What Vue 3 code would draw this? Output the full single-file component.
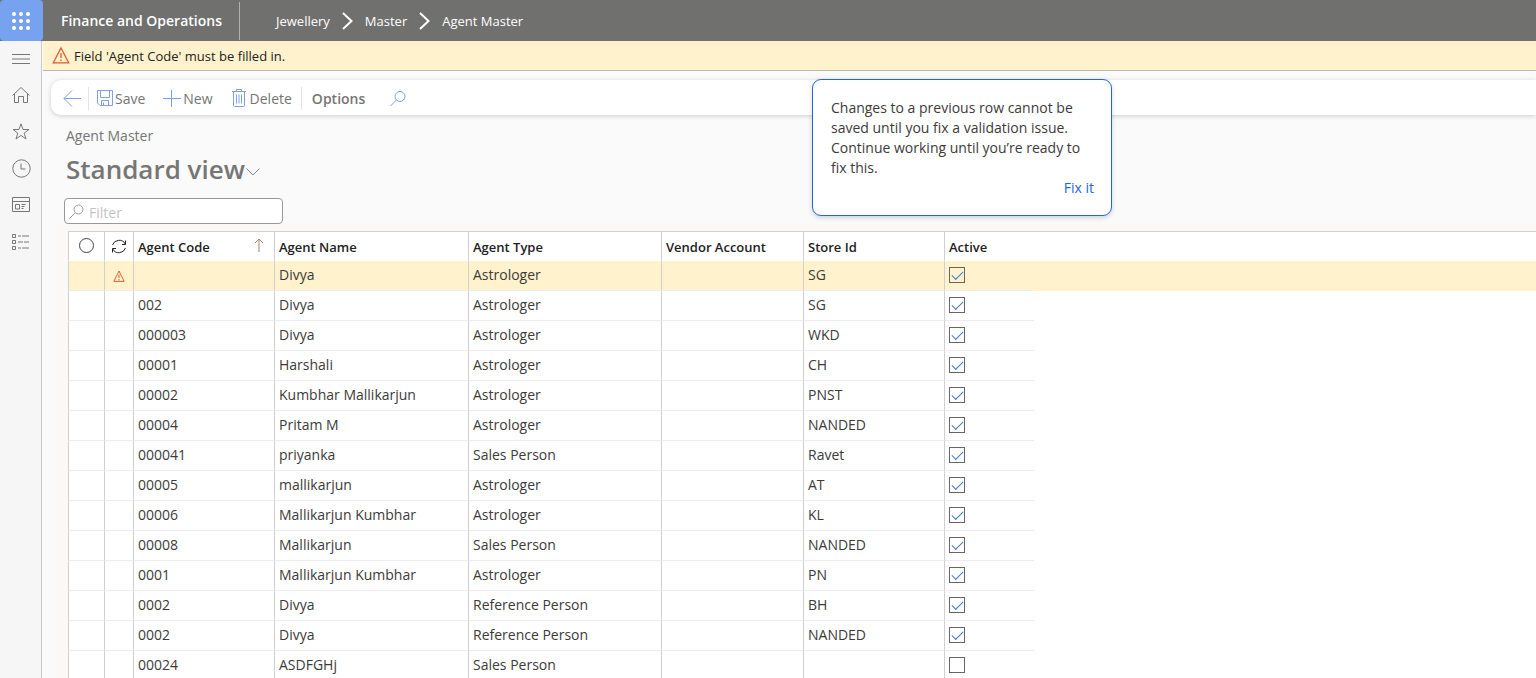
<script setup>
import { ref } from 'vue'

const crumbs = ['Jewellery', 'Master', 'Agent Master']
const columns = ['Agent Name', 'Agent Type', 'Vendor Account', 'Store Id', 'Active']
const filter = ref('')

const rows = ref(
  [
    ['', 'Divya', 'Astrologer', 'SG', true],
    ['002', 'Divya', 'Astrologer', 'SG', true],
    ['000003', 'Divya', 'Astrologer', 'WKD', true],
    ['00001', 'Harshali', 'Astrologer', 'CH', true],
    ['00002', 'Kumbhar Mallikarjun', 'Astrologer', 'PNST', true],
    ['00004', 'Pritam M', 'Astrologer', 'NANDED', true],
    ['000041', 'priyanka', 'Sales Person', 'Ravet', true],
    ['00005', 'mallikarjun', 'Astrologer', 'AT', true],
    ['00006', 'Mallikarjun Kumbhar', 'Astrologer', 'KL', true],
    ['00008', 'Mallikarjun', 'Sales Person', 'NANDED', true],
    ['0001', 'Mallikarjun Kumbhar', 'Astrologer', 'PN', true],
    ['0002', 'Divya', 'Reference Person', 'BH', true],
    ['0002', 'Divya', 'Reference Person', 'NANDED', true],
    ['00024', 'ASDFGHj', 'Sales Person', '', false],
  ].map(([code, name, type, store, active]) => ({ code, name, type, store, active }))
)
</script>

<template>
  <div class="app">
    <header class="topbar">
      <button class="waffle" type="button" aria-label="App launcher">
        <svg width="20" height="20" viewBox="0 0 20 20" fill="#fff">
          <template v-for="y in 3" :key="y">
            <circle v-for="x in 3" :key="x" :cx="x * 7 - 4" :cy="y * 7 - 4" r="2" />
          </template>
        </svg>
      </button>
      <span class="brand">Finance and Operations</span>
      <nav class="crumbs" aria-label="Breadcrumb">
        <template v-for="(c, i) in crumbs" :key="c">
          <svg v-if="i" width="11" height="18" viewBox="0 0 11 18" fill="none" stroke="#fff" stroke-width="2">
            <path d="M1 1l8.500 8L1 17" />
          </svg>
          <a href="#">{{ c }}</a>
        </template>
      </nav>
    </header>

    <div class="body">
      <nav class="rail" aria-label="Navigation">
        <button type="button" aria-label="Expand navigation">
          <svg width="20" height="20" viewBox="0 0 20 20"><path d="M1 5.500h18M1 10h18M1 14.500h18" /></svg>
        </button>
        <button type="button" aria-label="Home">
          <svg width="20" height="20" viewBox="0 0 20 20">
            <path d="M1.500 9.500L10 1.500l8.500 8M3.500 8v8.500h4v-6h5v6h4V8" />
          </svg>
        </button>
        <button type="button" aria-label="Favorites">
          <svg width="20" height="20" viewBox="0 0 20 20">
            <path d="M10 1.800l2 5.700h6l-4.800 3.600 1.800 5.900-5-3.600-5 3.600 1.800-5.900L2 7.500h6z" />
          </svg>
        </button>
        <button type="button" aria-label="Recent">
          <svg width="20" height="20" viewBox="0 0 20 20">
            <circle cx="10.500" cy="9.500" r="8.700" /><path d="M10 4.500v5.500h4.500" />
          </svg>
        </button>
        <button type="button" aria-label="Workspaces">
          <svg width="20" height="20" viewBox="0 0 20 20">
            <path d="M1.500 2.500h17v14h-17zM1.500 6.500h17M4.500 9.500h4v4.500h-4zM10.500 9.500h4M10.500 11.500h3M10.500 13.500h2" />
          </svg>
        </button>
        <button type="button" aria-label="Modules">
          <svg width="20" height="20" viewBox="0 0 20 20">
            <path d="M1.500 2.500h3v3h-3zM1.500 8.500h3v3h-3zM1.500 14.500h3v3h-3zM7 4h3M11 4h7M7 10h5M13 10h5M7 16h3M11 16h7" />
          </svg>
        </button>
      </nav>

      <main class="main">
        <div class="alert" role="alert">
          <svg width="18" height="18" viewBox="0 0 18 18" fill="none" stroke="#e05a28" stroke-width="1.300">
            <path d="M9 1L16.700 15.800H1.300zM9 6v5M9 12.500v1.500" />
          </svg>
          Field 'Agent Code' must be filled in.
        </div>

        <div class="toolbar">
          <button class="back" type="button" aria-label="Back">
            <svg width="18" height="18" viewBox="0 0 18 18"><path d="M18 8.500H1M9 .500L1 8.500l8 8" /></svg>
          </button>
          <span class="sep"></span>
          <button class="save" type="button">
            <svg width="16" height="18" viewBox="0 0 16 18">
              <path d="M.500 .500h15v15H3l-2.500-2.500zM3.500 .500v7h9v-7M4.500 15.500v-5h7v5M6.500 12.500v3" />
            </svg>
            Save
          </button>
          <button class="new" type="button">
            <svg width="18" height="18" viewBox="0 0 18 18"><path d="M8.500 0v17M0 8.500h18" /></svg>
            New
          </button>
          <button class="delete" type="button">
            <svg width="16" height="20" viewBox="0 0 16 20">
              <path d="M1 2.500h14M5.500 2.500v-2h5v2M2.500 2.500v14q0 1 1 1h9q1 0 1-1v-14M5.500 5.500v9M8 5.500v9M10.500 5.500v9" />
            </svg>
            Delete
          </button>
          <span class="sep"></span>
          <button class="options" type="button">Options</button>
          <button class="search" type="button" aria-label="Search">
            <svg width="16" height="16" viewBox="0 0 16 16"><circle cx="10" cy="5.500" r="5" /><path d="M6.500 9L.500 15" /></svg>
          </button>
        </div>

        <div class="heading">
          <div class="caption">Agent Master</div>
          <h1>
            Standard view
            <button type="button" aria-label="Change view">
              <svg width="14" height="10" viewBox="0 0 14 10"><path d="M.500 1.500L7 8l6.500-6.500" /></svg>
            </button>
          </h1>
          <label class="filter">
            <svg width="15" height="15" viewBox="0 0 15 15"><circle cx="9.500" cy="5.500" r="4.500" /><path d="M6.300 8.700L.500 14.500" /></svg>
            <input v-model="filter" type="text" placeholder="Filter" aria-label="Filter" />
          </label>
        </div>

        <section class="grid">
          <table>
            <colgroup>
              <col class="c-sel" /><col class="c-state" /><col class="c-code" /><col class="c-name" />
              <col class="c-type" /><col class="c-vendor" /><col class="c-store" /><col class="c-active" /><col />
            </colgroup>
            <thead>
              <tr>
                <th class="icon">
                  <button type="button" aria-label="Select all">
                    <svg width="16" height="16" viewBox="0 0 16 16"><circle cx="7.500" cy="7.500" r="7" /></svg>
                  </button>
                </th>
                <th class="icon">
                  <button type="button" aria-label="Refresh">
                    <svg class="refresh" width="16" height="16" viewBox="0 0 16 16">
                      <path d="M1.500 7A7 7 0 0 1 14.300 6M14.500 2.500v4H11M14.500 10A7 7 0 0 1 1.700 11M1.500 14.500v-4H5" />
                    </svg>
                  </button>
                </th>
                <th>
                  <span class="sorted">Agent Code
                    <svg width="10" height="16" viewBox="0 0 10 16"><path d="M5 13V0M1 4l4-4 4 4" /></svg>
                  </span>
                </th>
                <th v-for="c in columns" :key="c">{{ c }}</th>
                <th class="rest"></th>
              </tr>
            </thead>
            <tbody>
              <tr v-for="(r, i) in rows" :key="i" :class="{ invalid: i === 0 }">
                <td></td>
                <td class="icon">
                  <svg v-if="i === 0" class="warn" width="12" height="12" viewBox="0 0 12 12">
                    <path d="M6 1L11.200 11.400H.800zM6 4.500V8M6 9v1.500" />
                  </svg>
                </td>
                <td>{{ r.code }}</td>
                <td>{{ r.name }}</td>
                <td>{{ r.type }}</td>
                <td></td>
                <td>{{ r.store }}</td>
                <td class="check"><input v-model="r.active" type="checkbox" :aria-label="'Active, ' + r.name" /></td>
                <td class="rest"></td>
              </tr>
            </tbody>
          </table>
        </section>

        <aside class="callout" role="dialog" aria-label="Validation issue">
          <p>Changes to a previous row cannot be saved until you fix a validation issue. Continue working until you’re ready to fix this.</p>
          <a href="#">Fix it</a>
        </aside>
      </main>
    </div>
  </div>
</template>

<style>
body {
  margin: 0;
}
</style>

<style scoped>
.app {
  display: flex;
  flex-direction: column;
  height: 100vh;
  overflow: hidden;
  font-family: "Segoe UI", "Open Sans", "Noto Sans", sans-serif;
  font-size: 14px;
  color: #3c3b3a;
  background: #fafafa;
}
* {
  box-sizing: border-box;
}
button {
  display: inline-flex;
  align-items: center;
  padding: 0;
  border: 0;
  background: none;
  font: inherit;
  color: inherit;
}
a {
  color: inherit;
  text-decoration: none;
}
svg {
  flex: none;
  display: block;
  overflow: visible;
}
.topbar {
  display: flex;
  align-items: center;
  flex: none;
  height: 41px;
  background: #70706e;
  color: #fff;
}
.waffle {
  justify-content: center;
  width: 43px;
  height: 41px;
  padding-right: 1px;
  border-radius: 4px;
  background: #76a2f0;
}
.brand {
  width: 197px;
  padding-left: 18px;
  border-right: 1px solid #b0b0ae;
  line-height: 38px;
  font-weight: 600;
}
.crumbs {
  display: flex;
  align-items: center;
  gap: 12px;
  padding-left: 36px;
  font-size: 13px;
}
.body {
  display: flex;
  flex: 1;
  min-height: 0;
}
.rail {
  display: grid;
  grid-auto-rows: 36px 37px;
  align-content: start;
  flex: none;
  width: 42px;
  border-right: 1px solid #c8c8c8;
  background: #f6f6f6;
}
.rail button {
  justify-content: center;
}
.rail svg {
  fill: none;
  stroke: #767674;
}
.main {
  position: relative;
  flex: 1;
  min-width: 0;
  margin-left: 1px;
}
.alert {
  display: flex;
  align-items: center;
  gap: 4px;
  height: 30px;
  padding-left: 9px;
  border-bottom: 1px solid #bcb8b4;
  background: #fff2cd;
  font-size: 13px;
  color: #222;
}
.toolbar {
  display: flex;
  align-items: center;
  height: 35px;
  margin: 9px 0 0 8px;
  padding: 2px 0 0 12px;
  border-radius: 10px 0 0 10px;
  background: #fff;
  box-shadow: 0 1px 5px rgba(0, 0, 0, 0.18);
  color: #767674;
}
.toolbar svg {
  fill: none;
  stroke: #809fea;
}
.sep {
  width: 1px;
  height: 23px;
  background: #e4e4e4;
}
.back {
  margin-right: 7px;
}
.save {
  gap: 2px;
  margin-left: 8px;
}
.new {
  gap: 2px;
  margin-left: 18px;
}
.delete {
  gap: 3px;
  margin: 0 9px 0 18px;
}
.options {
  margin-left: 10px;
  font-weight: 600;
}
.search {
  margin-left: 25px;
}
.heading {
  padding: 11px 0 0 21px;
  color: #767674;
}
.caption {
  padding-left: 2px;
  line-height: 20px;
}
h1 {
  display: flex;
  align-items: center;
  gap: 1px;
  margin: 5px 0 11px;
  padding-left: 2px;
  font-size: 26px;
  line-height: 36px;
  font-weight: 600;
}
h1 button {
  padding-top: 6px;
}
h1 svg {
  fill: none;
  stroke: #76898f;
}
.filter {
  display: flex;
  align-items: center;
  gap: 5px;
  width: 219px;
  height: 26px;
  padding-left: 4px;
  border: 1px solid #999;
  border-radius: 4px;
  background: #fff;
}
.filter svg {
  fill: none;
  stroke: #9a9a9a;
}
.filter input {
  flex: 1;
  min-width: 0;
  padding: 2px 0 0;
  border: 0;
  outline: 0;
  background: none;
  font: inherit;
}
.filter input::placeholder {
  color: #c4c4c4;
}
.grid {
  margin-left: 13px;
  padding: 7px 0 0 12px;
  background: #faf9f8;
}
table {
  width: 100%;
  table-layout: fixed;
  border-spacing: 0;
  border-top: 1px solid #d0d0d0;
  background: #fff;
}
.c-sel {
  width: 36px;
}
.c-state {
  width: 29px;
}
.c-code,
.c-store {
  width: 141px;
}
.c-name {
  width: 194px;
}
.c-type {
  width: 193px;
}
.c-vendor {
  width: 142px;
}
.c-active {
  width: 90px;
}
th,
td {
  height: 30px;
  padding: 0 0 2px 4px;
  border-left: 1px solid #d0d0d0;
  border-bottom: 1px solid #ececec;
  text-align: left;
  white-space: nowrap;
}
th {
  height: 29px;
  padding: 2px 0 0 4px;
  border-bottom: 1px solid #fff;
  font-size: 13px;
  font-weight: 600;
  color: #222;
}
th.rest,
td.rest {
  border-left: 0;
  border-bottom-color: transparent;
}
.icon {
  padding: 0;
}
.icon svg {
  margin: 0 auto;
}
.icon button {
  display: block;
  width: 100%;
}
th svg {
  fill: none;
  stroke: #444;
}
.refresh {
  stroke: #222;
}
.sorted {
  display: flex;
  align-items: center;
  justify-content: space-between;
  padding-right: 10px;
}
.sorted svg {
  stroke: #a38465;
}
.warn {
  fill: none;
  stroke: #e0602c;
}
.invalid td {
  background: #fff2cd;
}
.check input {
  appearance: none;
  display: block;
  width: 16px;
  height: 16px;
  margin: 0;
  border: 1px solid #666;
  background: transparent;
}
.check input:checked::after {
  content: "";
  display: block;
  width: 10px;
  height: 5px;
  margin: 3px 0 0 2px;
  border: solid #3f76e6;
  border-width: 0 0 1px 1px;
  transform: rotate(-45deg);
}
.callout {
  position: absolute;
  top: 38px;
  left: 769px;
  width: 300px;
  padding: 18px 17px 17px 18px;
  border: 1px solid #2266e3;
  border-radius: 9px;
  background: #fff;
  box-shadow: 0 2px 5px rgba(0, 0, 0, 0.16);
  line-height: 20px;
}
.callout p {
  margin: 0;
}
.callout a {
  display: block;
  text-align: right;
  color: #2266e3;
}
</style>
